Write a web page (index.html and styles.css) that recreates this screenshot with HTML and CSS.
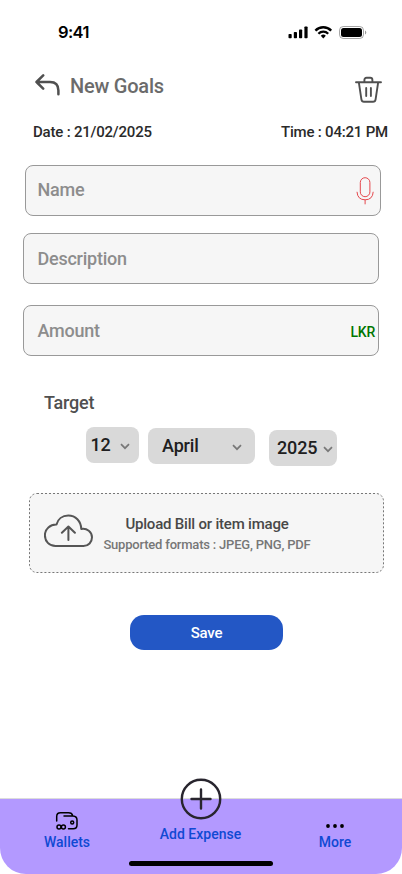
FILE: index.html
```html
<!DOCTYPE html>
<html lang="en">
<head>
<meta charset="utf-8">
<title>New Goals</title>
<link rel="stylesheet" href="styles.css">
</head>
<body>
<div class="screen">
  <header class="status">
    <span class="clock">9:41</span>
    <svg class="status-icons" width="80" height="14" viewBox="0 0 80 14">
      <rect x="0.5" y="8" width="3.2" height="4.3" rx="0.8"/>
      <rect x="5.8" y="6" width="3.2" height="6.3" rx="0.8"/>
      <rect x="11" y="3.4" width="3.2" height="8.9" rx="0.8"/>
      <rect x="16.4" y="0.4" width="3.2" height="11.9" rx="0.8"/>
      <g fill="none" stroke="#000" stroke-width="2.3">
        <path d="M27.4 4.6A11 11 0 0 1 43.2 4.6"/>
        <path d="M30.4 7.7A7 7 0 0 1 40.2 7.7"/>
      </g>
      <path d="M35.3 12.4L32.8 9.8A3.6 3.6 0 0 1 37.8 9.8Z"/>
      <rect x="51.5" y="0.5" width="24" height="12" rx="3.8" fill="none" stroke="#000" stroke-opacity=".35"/>
      <rect x="53" y="2" width="21" height="9" rx="2.5"/>
      <path d="M77 4.5v4a2.2 2.2 0 0 0 0-4" fill-opacity=".4"/>
    </svg>
  </header>

  <div class="title-bar">
    <svg class="back" width="26" height="22" viewBox="0 0 26 22"><path d="M8.2 1.4L1.5 8L8.2 14.6M1.5 8H15Q23.4 8 23.4 16.5V20.3"/></svg>
    <h1>New Goals</h1>
    <svg class="trash" width="28" height="28" viewBox="0 0 28 28"><path d="M2 6.2H27M4.8 6.2L7.4 23.4Q7.8 25.8 10 25.8H19Q21.2 25.8 21.6 23.4L24.2 6.2M10.4 6V4Q10.4 1.8 12.6 1.8H16.2Q18.4 1.8 18.4 4V6M12.2 12V20M16.9 12V20"/></svg>
  </div>

  <div class="meta"><span>Date : 21/02/2025</span><span>Time : 04:21 PM</span></div>

  <main>
    <div class="field name"><span>Name</span>
      <svg width="18" height="28" viewBox="0 0 18 28"><rect x="4.3" y="0.7" width="9.6" height="19" rx="4.8"/><path d="M1 14.8Q1.5 22.8 9.1 22.8Q16.7 22.8 17.2 14.8M9.1 22.8V27.3"/></svg>
    </div>
    <div class="field description"><span>Description</span></div>
    <div class="field amount"><span>Amount</span><b>LKR</b></div>

    <h2>Target</h2>
    <div class="selects">
      <div class="select day">12<svg width="10" height="7" viewBox="0 0 10 7"><path d="M1 1.2L5 5.2L9 1.2"/></svg></div>
      <div class="select month">April<svg width="10" height="7" viewBox="0 0 10 7"><path d="M1 1.2L5 5.2L9 1.2"/></svg></div>
      <div class="select year">2025<svg width="10" height="7" viewBox="0 0 10 7"><path d="M1 1.2L5 5.2L9 1.2"/></svg></div>
    </div>

    <div class="upload">
      <svg class="outline" width="355" height="80"><rect x="0.5" y="0.5" width="354" height="79" rx="7.5"/></svg>
      <svg class="cloud" width="50" height="34" viewBox="0 0 50 34"><path d="M11.5 32C5.2 32 0.9 27.2 0.9 21.2C0.9 15 6.3 10.3 12.5 10.5C13.8 5 18.4 1.5 24.3 1.5C31.5 1.5 37 7 37.3 15C43 14 48 18 48 23.3C48 28.2 44.4 32 39.5 32ZM24.4 26V12.8M17.9 18.8L24.4 12.5L30.9 18.8"/></svg>
      <div class="upload-text"><strong>Upload Bill or item image</strong><span>Supported formats : JPEG, PNG, PDF</span></div>
    </div>
    <div class="save">Save</div>
  </main>

  <nav>
    <div class="tab wallets">
      <svg width="24" height="20" viewBox="0 0 24 20"><path d="M1.7 10V5.5Q1.7 1.7 5.5 1.7H13.5Q17 1.7 17.7 4.6M9 5H18Q22 5.2 22 9V14Q22 17.8 18.2 17.8H13.5"/><circle cx="17.2" cy="11.6" r="1.5"/><circle cx="4" cy="16" r="2"/><circle cx="8.4" cy="16" r="2"/></svg>
      <span>Wallets</span>
    </div>
    <div class="tab add">
      <svg width="42" height="42" viewBox="0 0 42 42"><circle cx="21" cy="21" r="19.2"/><path d="M21 11.5V30.5M11.5 21H30.5"/></svg>
      <span>Add Expense</span>
    </div>
    <div class="tab more">
      <svg width="18" height="4" viewBox="0 0 18 4"><circle cx="2" cy="2" r="1.9"/><circle cx="9" cy="2" r="1.9"/><circle cx="16" cy="2" r="1.9"/></svg>
      <span>More</span>
    </div>
    <i class="home"></i>
  </nav>
</div>
</body>
</html>
```
FILE: styles.css
```css
* { box-sizing: border-box; }
body { margin: 0; background: #fff; font-family: Roboto, sans-serif; font-weight: 500; }
svg { display: block; flex: none; }
h1, h2 { margin: 0; font-weight: 500; }
.screen { width: 402px; height: 874px; display: flex; flex-direction: column; overflow: hidden; }

.status { height: 66px; display: flex; justify-content: space-between; align-items: flex-start; padding: 22px 30px 0 58px; }
.clock { font: 600 16.5px/20px Inter, sans-serif; letter-spacing: -0.6px; }
.status-icons { margin: 4px 4px 0 0; }

.title-bar { height: 54px; display: flex; align-items: flex-start; padding: 8px 20px 0 35px; }
.title-bar svg { fill: none; stroke: #505050; stroke-linecap: round; stroke-linejoin: round; }
.back { stroke-width: 2.5; }
.title-bar h1 { flex: 1; padding-left: 9px; font-size: 20px; line-height: 24px; letter-spacing: -0.22px; color: #6b6b6b; }
.trash { margin-top: 2px; stroke-width: 1.9; }

.meta { height: 45px; display: flex; justify-content: space-between; padding: 3px 14px 0 33px; font-size: 15px; line-height: 18px; letter-spacing: -0.2px; color: #2a2a2a; }

main { flex: 1; }
.field { width: 356px; height: 51px; display: flex; align-items: center; justify-content: space-between; border: 1px solid #999; border-radius: 8px; background: #f6f6f6; font-size: 18px; line-height: 20px; letter-spacing: -0.24px; color: #8d8d8d; }
.name { margin-left: 25px; padding: 0 6px 2px 11.5px; }
.name svg { margin-top: 2px; fill: none; stroke: #e5484d; stroke-width: 1; }
.description { margin: 17px 0 0 23px; padding-left: 13.5px; }
.amount { margin: 21px 0 0 23px; padding: 0 3px 0 13.5px; }
.amount b { padding-top: 2px; font-size: 14px; font-weight: 500; color: #007600; }

h2 { margin: 36px 0 0 44px; font-size: 18px; line-height: 22px; letter-spacing: -0.2px; color: #505050; }
.selects { display: flex; padding: 13px 0 0 86px; height: 79px; align-items: flex-start; }
.select { height: 36px; display: flex; align-items: center; justify-content: space-between; border-radius: 8px; background: #d9d9d9; font-size: 18px; line-height: 20px; letter-spacing: -0.15px; color: #202020; }
.select svg { margin-top: 3px; fill: none; stroke: #787878; stroke-width: 1.7; }
.day { width: 53px; padding: 0 9.5px 0 4.5px; }
.month { width: 107px; margin: 1px 0 0 9px; padding: 0 13px 0 14px; }
.year { width: 68px; margin: 3px 0 0 14px; padding: 0 4px 0 8px; }

.upload { position: relative; width: 355px; height: 80px; margin-left: 29px; padding: 21px 0 0 15px; display: flex; align-items: flex-start; border-radius: 8px; background: #f6f6f6; }
.outline { position: absolute; inset: 0; fill: none; stroke: #777; stroke-dasharray: 2 2; }
.cloud { fill: none; stroke: #555; stroke-width: 2; stroke-linecap: round; stroke-linejoin: round; }
.upload-text { width: 208px; margin-left: 9px; display: flex; flex-direction: column; align-items: center; white-space: nowrap; }
.upload-text strong { font-size: 15px; font-weight: 500; line-height: 20px; letter-spacing: -0.2px; color: #484848; }
.upload-text span { font-size: 13px; line-height: 22px; letter-spacing: -0.2px; color: #777; }
.save { width: 153px; height: 35px; margin: 42px 0 0 130px; border-radius: 14px; background: #2357c5; color: #fff; font-size: 15px; line-height: 37px; letter-spacing: -0.2px; text-align: center; }

nav { position: relative; height: 76px; display: grid; grid-template-columns: 134px 133px 136px; border-top: 1px solid #dcdcdc; border-radius: 0 0 26px 26px; background: #b399ff; font-size: 14px; line-height: 16px; color: #1049d3; }
.tab { display: flex; flex-direction: column; align-items: center; }
.wallets svg { margin: 12px 0 3px; fill: none; stroke: #000; stroke-width: 1.5; stroke-linecap: round; }
.add svg { margin: -21px 0 6px; fill: none; stroke: #28252e; stroke-width: 2.4; stroke-linecap: round; }
.more svg { margin: 25px 0 6px; }
.home { position: absolute; left: 129px; bottom: 8px; width: 144px; height: 5px; border-radius: 3px; background: #000; }
```
